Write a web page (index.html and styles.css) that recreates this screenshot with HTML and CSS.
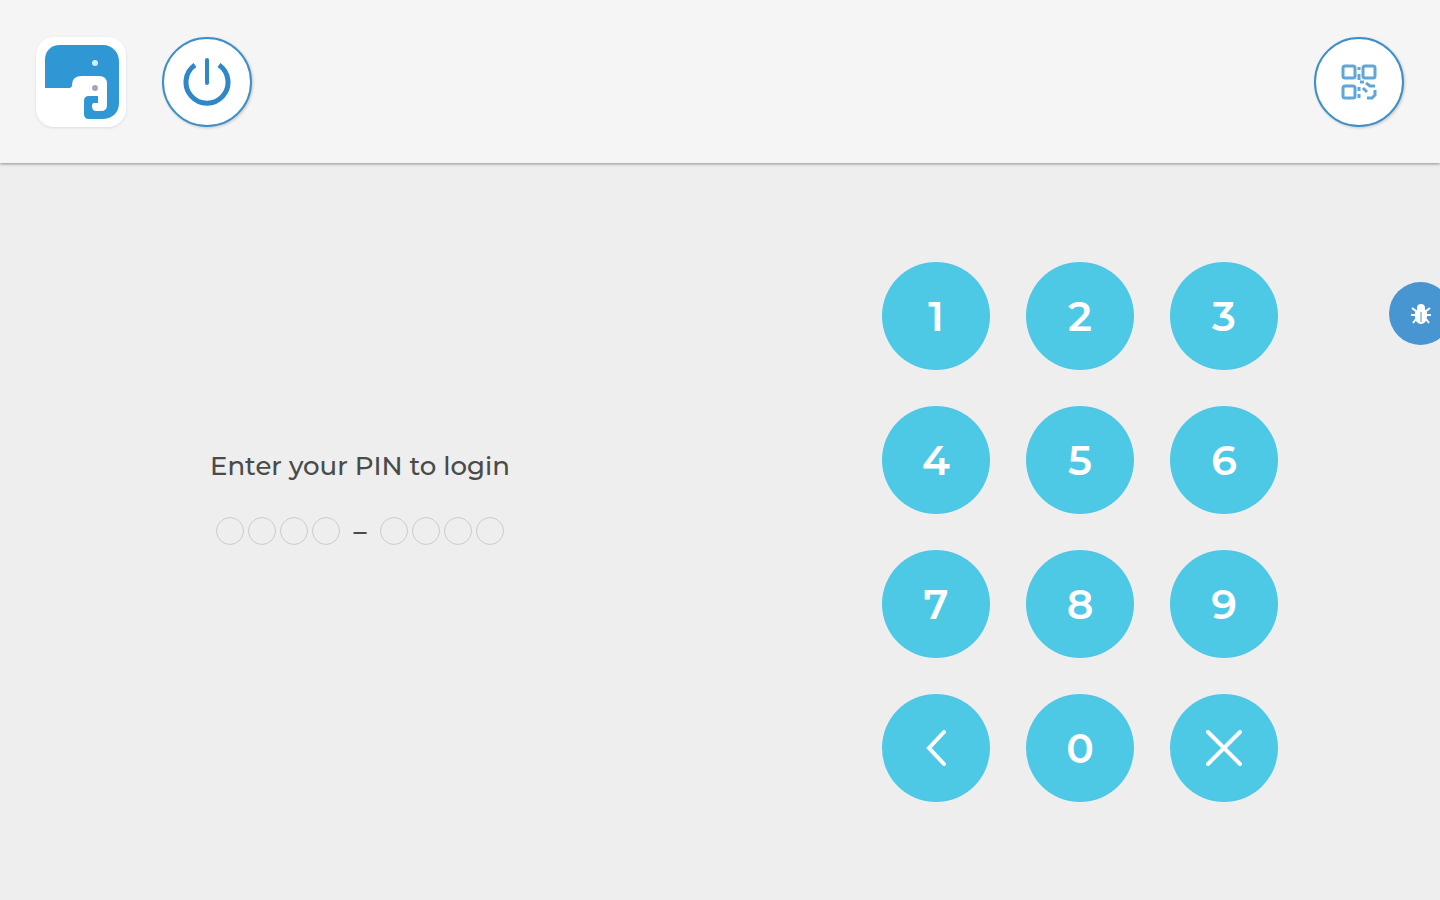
FILE: index.html
```
<!DOCTYPE html>
<html lang="en">
<head>
    <meta charset="UTF-8">
    <meta name="viewport" content="width=device-width, initial-scale=1.0">
    <title>Login</title>
    <link rel="stylesheet" href="styles.css">
</head>
<body>
    <header class="header">
        <div class="header-left">
            <div class="logo">
                <svg viewBox="0 0 90 90" role="img" aria-label="Logo">
                    <path fill="#2f97d3" d="M9 51V23C9 14 15 8 24 8H67C76 8 83 15 83 24V66C83 76 76 82 66 82H53Q48 82 48 77V64Q48 59 53 59H62V66H58Q56 66 56 69Q56 74 60 74H65Q71 74 71 68V47Q71 39 63 39H46Q36 39 36 48Q36 51 33 51Z"/>
                    <circle cx="59" cy="26" r="3" fill="#d5ecf8"/>
                    <circle cx="59" cy="51" r="3" fill="#a9a4bd"/>
                </svg>
            </div>
            <button type="button" class="round-button" aria-label="Power">
                <svg class="power-icon" viewBox="0 0 48 48">
                    <path stroke-width="5" stroke-linecap="butt" d="M12 7A21 21 0 1 0 36 7"/>
                    <path d="M24 2V25"/>
                </svg>
            </button>
        </div>
        <button type="button" class="round-button" aria-label="Scan QR code">
            <svg class="qr-icon" viewBox="0 0 36 36">
                <rect x="2" y="2" width="12" height="12" rx="2"/>
                <rect x="22" y="2" width="12" height="12" rx="2"/>
                <rect x="2" y="22" width="12" height="12" rx="2"/>
                <path d="M18 3V6M18 10V16M19 18H23M18 23V27M18 30V34M22 24L26 28M25 19L29 22H34M34 26V31L31 34H26"/>
            </svg>
        </button>
    </header>

    <main class="main">
        <section class="pin">
            <h1>Enter your PIN to login</h1>
            <div class="pin-dots">
                <div class="dot-group">
                    <span class="dot"></span>
                    <span class="dot"></span>
                    <span class="dot"></span>
                    <span class="dot"></span>
                </div>
                <span class="dash">–</span>
                <div class="dot-group">
                    <span class="dot"></span>
                    <span class="dot"></span>
                    <span class="dot"></span>
                    <span class="dot"></span>
                </div>
            </div>
        </section>

        <section class="keypad">
            <button type="button">1</button>
            <button type="button">2</button>
            <button type="button">3</button>
            <button type="button">4</button>
            <button type="button">5</button>
            <button type="button">6</button>
            <button type="button">7</button>
            <button type="button">8</button>
            <button type="button">9</button>
            <button type="button" aria-label="Back">
                <svg viewBox="0 0 40 40"><path d="M28 4L13 20L28 36"/></svg>
            </button>
            <button type="button">0</button>
            <button type="button" aria-label="Clear">
                <svg viewBox="0 0 40 40"><path d="M4 4L36 36M36 4L4 36"/></svg>
            </button>
        </section>
    </main>

    <button type="button" class="bug-button" aria-label="Report a bug">
        <svg viewBox="0 0 24 24">
            <path fill="#fff" d="M8 6a4 4 0 0 1 8 0v2h2v7a6 7 0 0 1-12 0V8h2z"/>
            <path fill="none" stroke="#fff" stroke-width="2" d="M3 6L7 9M21 6L17 9M2 13H22M4 21L7 17M20 21L17 17"/>
            <path stroke="#4796d2" d="M12 10V20"/>
        </svg>
    </button>
</body>
</html>
```

FILE: styles.css
```
* {
    box-sizing: border-box;
}
body {
    font-family: Montserrat, Inter, sans-serif;
    margin: 0;
    min-height: 100vh;
    display: flex;
    flex-direction: column;
    background: #eee;
    color: #4a4a4a;
}
button {
    display: flex;
    justify-content: center;
    align-items: center;
    padding: 0;
    border: none;
    border-radius: 50%;
    font-family: inherit;
    cursor: pointer;
}
.header {
    display: flex;
    justify-content: space-between;
    padding: 37px 36px 36px;
    background: #f5f5f5;
    box-shadow: 0 1px 3px rgba(0, 0, 0, 0.4);
}
.header-left {
    display: flex;
    gap: 36px;
}
.logo {
    width: 90px;
    height: 90px;
    background: #fff;
    border-radius: 18px;
    box-shadow: 0 1px 3px rgba(0, 0, 0, 0.1);
}
.logo svg {
    display: block;
}
.round-button {
    width: 90px;
    height: 90px;
    background: #fff;
    border: 2px solid #3d8fca;
    box-shadow: 1px 1px 3px rgba(0, 0, 0, 0.2);
}
.round-button svg {
    fill: none;
}
.power-icon {
    width: 48px;
    height: 48px;
    stroke: #2d87c8;
    stroke-width: 4;
    stroke-linecap: round;
}
.qr-icon {
    width: 36px;
    height: 36px;
    stroke: #5fa6d9;
    stroke-width: 3;
}
.main {
    flex: 1;
    display: grid;
    grid-template-columns: 1fr 1fr;
    align-items: center;
}
.pin {
    display: flex;
    flex-direction: column;
    align-items: center;
    gap: 34px;
    padding-bottom: 70px;
}
.pin h1 {
    margin: 0;
    font-size: 26px;
    font-weight: 500;
    line-height: 34px;
}
.pin-dots {
    display: flex;
    align-items: center;
}
.dot-group {
    display: flex;
    gap: 4px;
}
.dot {
    width: 28px;
    height: 28px;
    border: 1px solid #ccc;
    border-radius: 50%;
}
.dash {
    width: 40px;
    font-size: 26px;
    font-weight: 600;
    line-height: 26px;
    text-align: center;
}
.keypad {
    display: grid;
    grid-template-columns: repeat(3, 108px);
    justify-content: center;
    gap: 36px;
}
.keypad button {
    height: 108px;
    background: #4dc9e6;
    color: #fff;
    font-size: 41px;
    font-weight: 600;
}
.keypad svg {
    width: 40px;
    height: 40px;
    fill: none;
    stroke: #fff;
    stroke-width: 4;
    stroke-linecap: round;
}
.bug-button {
    position: fixed;
    top: 282px;
    right: -12px;
    width: 63px;
    height: 63px;
    background: #4796d2;
}
.bug-button svg {
    width: 24px;
    height: 24px;
}
```
